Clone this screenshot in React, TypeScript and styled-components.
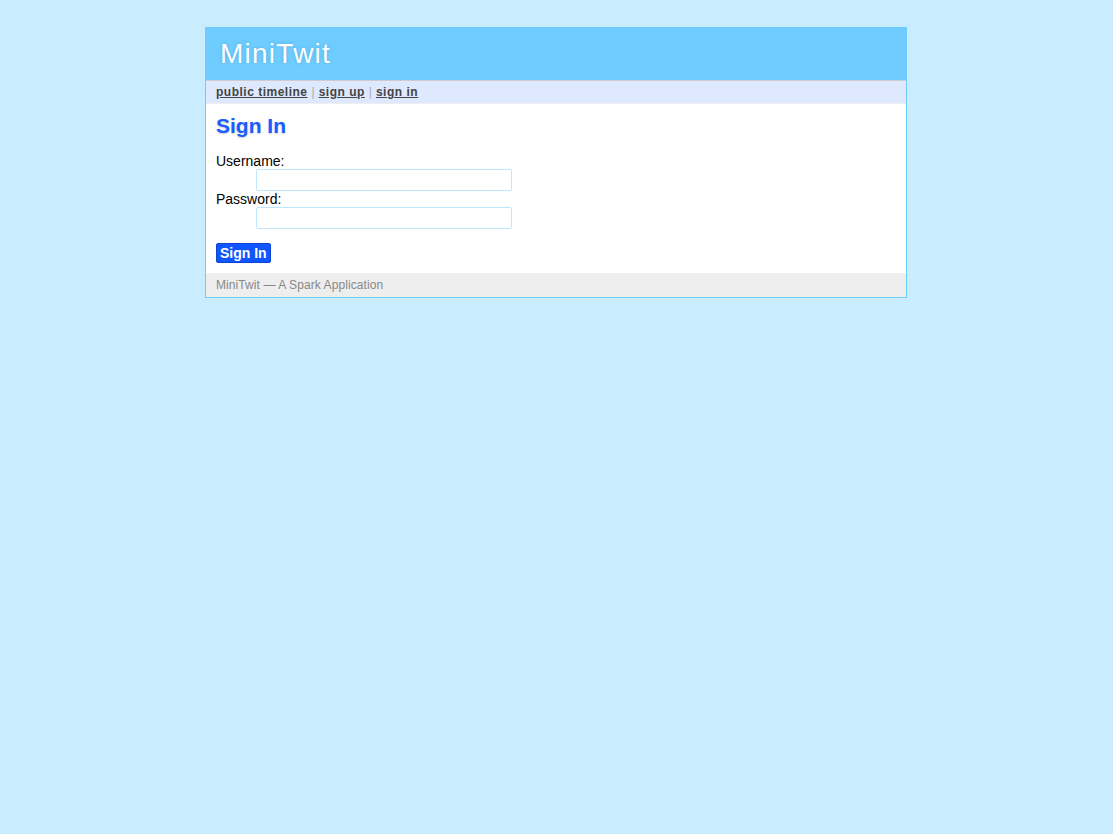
import React from "react";
import styled, { createGlobalStyle } from "styled-components";

const Global = createGlobalStyle`
  html, body { margin: 0; padding: 0; }
  body {
    background: #CAECFF;
    font-family: "Liberation Sans", Arial, sans-serif;
    font-size: 14px;
    padding-right: 1px;
  }
`;

const Page = styled.div`
  background: white;
  border: 1px solid #6ECCFF;
  width: 700px;
  margin: 27px auto;
`;

const Title = styled.h1`
  background: #6ECCFF;
  margin: 0;
  padding: 10px 14px;
  color: white;
  letter-spacing: 1.25px;
  text-shadow: 0 0 3px #5aa8d8;
  font-weight: normal;
  font-size: 28px;
  line-height: 32px;
`;

const Nav = styled.div`
  background: #DEE9FF;
  padding: 4px 10px;
  border-top: 1px solid #ccc;
  border-bottom: 1px solid #eee;
  color: #ccc;
  font-size: 12px;
  letter-spacing: 0.5px;
  line-height: 14px;
`;

const NavLink = styled.a`
  color: #444;
  font-weight: bold;
  text-decoration: underline;
`;

const Sep = styled.span`
  color: #aaa;
  margin: 0 4px;
  letter-spacing: 0;
`;

const Body = styled.div`
  padding: 10px;
`;

const Heading = styled.h2`
  margin: 0 0 15px 0;
  color: #1A5CFF;
  text-shadow: 0 1px 2px #ccc;
  font-size: 21px;
  line-height: 24px;
`;

const List = styled.dl`
  margin: 0;
`;

const Term = styled.dt`
  font-weight: normal;
  color: black;
  line-height: 16px;
`;

const Def = styled.dd`
  margin: 0 0 0 40px;
`;

const Field = styled.input`
  background: white;
  border: 1px solid #BFE6FF;
  padding: 2px;
  font-family: "Liberation Sans", Arial, sans-serif;
  font-size: 14px;
  border-radius: 2px;
  width: 256px;
  height: 22px;
  box-sizing: border-box;
  outline: none;
  display: block;
`;

const Actions = styled.div`
  margin-top: 14px;
  line-height: 0;
`;

const Submit = styled.button`
  background: #1155FF;
  border: 1px solid #0b44d6;
  padding: 1px 3px;
  font-family: "Liberation Sans", Arial, sans-serif;
  font-size: 14px;
  line-height: 16px;
  font-weight: bold;
  border-radius: 2px;
  color: white;
  cursor: pointer;
`;

const Footer = styled.div`
  background: #eee;
  color: #888;
  padding: 5px 10px;
  font-size: 12px;
  line-height: 14px;
  letter-spacing: 0.08px;
`;

export default function App() {
  return (
    <>
      <Global />
      <Page>
        <Title>MiniTwit</Title>
        <Nav>
          <NavLink href="#">public timeline</NavLink>
          <Sep>|</Sep>
          <NavLink href="#">sign up</NavLink>
          <Sep>|</Sep>
          <NavLink href="#">sign in</NavLink>
        </Nav>
        <Body>
          <Heading>Sign In</Heading>
          <form onSubmit={(e) => e.preventDefault()}>
            <List>
              <Term>Username:</Term>
              <Def>
                <Field type="text" name="username" />
              </Def>
              <Term>Password:</Term>
              <Def>
                <Field type="password" name="password" />
              </Def>
            </List>
            <Actions>
              <Submit type="submit">Sign In</Submit>
            </Actions>
          </form>
        </Body>
        <Footer>MiniTwit — A Spark Application</Footer>
      </Page>
    </>
  );
}
